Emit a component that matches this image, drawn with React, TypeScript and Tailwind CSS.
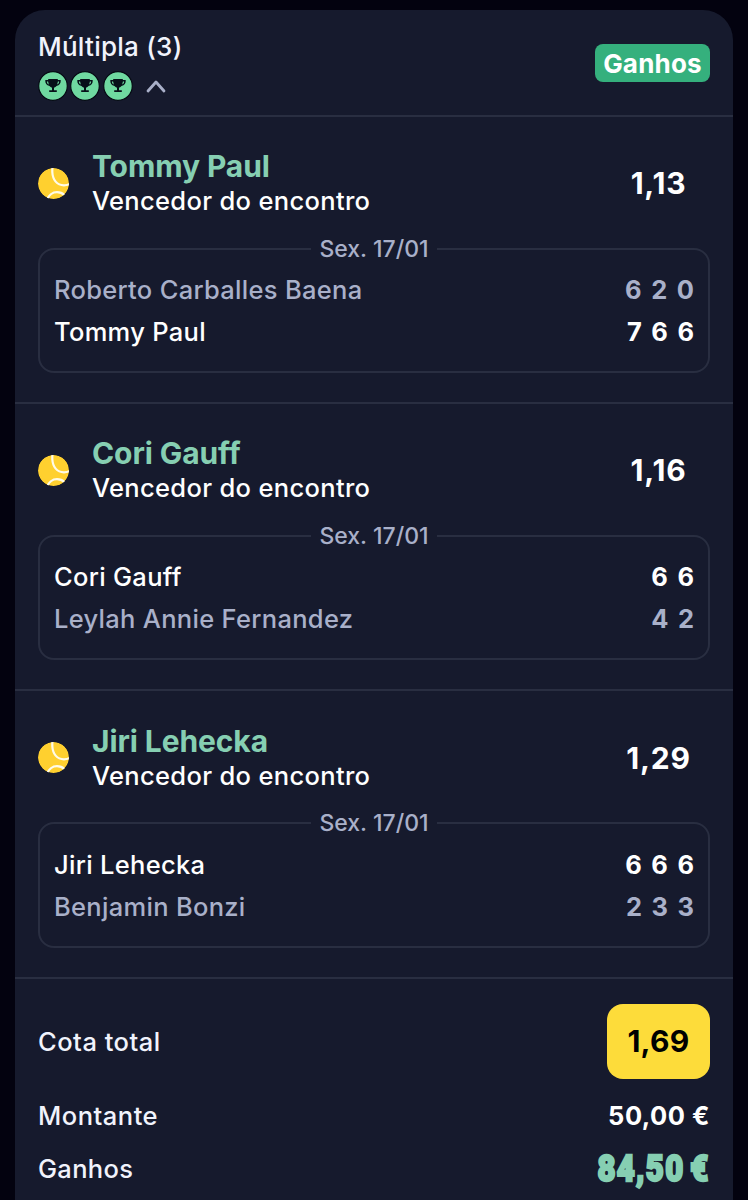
type Player = {
  name: string;
  sets: string;
  winner: boolean;
};

type Bet = {
  pick: string;
  odds: string;
  date: string;
  players: Player[];
};

const bets: Bet[] = [
  {
    pick: "Tommy Paul",
    odds: "1,13",
    date: "Sex. 17/01",
    players: [
      { name: "Roberto Carballes Baena", sets: "6 2 0", winner: false },
      { name: "Tommy Paul", sets: "7 6 6", winner: true },
    ],
  },
  {
    pick: "Cori Gauff",
    odds: "1,16",
    date: "Sex. 17/01",
    players: [
      { name: "Cori Gauff", sets: "6 6", winner: true },
      { name: "Leylah Annie Fernandez", sets: "4 2", winner: false },
    ],
  },
  {
    pick: "Jiri Lehecka",
    odds: "1,29",
    date: "Sex. 17/01",
    players: [
      { name: "Jiri Lehecka", sets: "6 6 6", winner: true },
      { name: "Benjamin Bonzi", sets: "2 3 3", winner: false },
    ],
  },
];

function TrophyBadge() {
  return (
    <svg width="30" height="30" viewBox="0 0 30 30" className="block">
      <circle cx="15" cy="15" r="14.3" fill="#6fd9a0" stroke="#060b14" strokeWidth="1.2" />
      <path
        d="M10.2 8h9.6v1h2.9c.3 3.4-1.2 5.5-4.200 6-.6.9-1.4 1.5-2.5 1.7v2.5h2.800v1.700h-7.600v-1.700H14v-2.500c-1.100-.2-1.900-.8-2.500-1.700-3-.5-4.500-2.600-4.200-6h2.900z"
        fill="#071019"
      />
      <path
        d="M10.1 10.5H8.900c.1 1.500.7 2.500 1.900 3zM19.900 10.5h1.200c-.1 1.500-.7 2.500-1.900 3z"
        fill="#6fd9a0"
      />
    </svg>
  );
}

function TennisBall() {
  return (
    <svg width="31" height="31" viewBox="0 0 31 31" className="block">
      <defs>
        <clipPath id="ball">
          <circle cx="15.5" cy="15.5" r="15.5" />
        </clipPath>
      </defs>
      <g clipPath="url(#ball)">
        <circle cx="15.5" cy="15.5" r="15.5" fill="#ffd02f" />
        <g fill="none" stroke="#fffbe8" strokeWidth="2.2">
          <path d="M14.3-1v5C14.700 12 19 17.300 26 17.300c2 0 4-.4 6-1.300" />
          <path d="M9 32c1.500-4.500 5.500-7.800 10-7.800 3 0 5.500 1 7.500 3" />
        </g>
      </g>
    </svg>
  );
}

function BetSection({ bet }: { bet: Bet }) {
  return (
    <section className="h-[287.3px] border-b-2 border-[#292e41] px-[23px] pt-[31.5px]">
      <div className="flex h-[70px] items-center">
        <TennisBall />
        <div className="ml-[23px] flex-1">
          <h2 className="text-[30px] leading-[36px] font-bold tracking-[-0.1px] text-[#86cfb2]">
            {bet.pick}
          </h2>
          <p className="text-[25.5px] leading-[34px] font-[450] tracking-[0.33px] text-white">
            Vencedor do encontro
          </p>
        </div>
        <div className="w-[103px] text-center text-[30px] leading-[36px] font-[650] tracking-[0.8px] text-white">
          {bet.odds}
        </div>
      </div>

      <div className="mt-[29.5px] h-[125.5px] rounded-2xl border-2 border-[#292e41] px-3.5">
        <div className="-mt-[15px] flex h-[28px] justify-center">
          <span className="bg-[#161a2d] px-2 text-[23px] leading-[28px] font-[450] whitespace-nowrap text-[#a9b0c9]">
            {bet.date}
          </span>
        </div>
        <div className="mt-[6.5px]">
          {bet.players.map((player) => (
            <div
              key={player.name}
              className={
                player.winner
                  ? "flex h-[42px] items-center justify-between text-[25.5px] text-white"
                  : "flex h-[42px] items-center justify-between text-[25.5px] text-[#a9b0c9]"
              }
            >
              <span className="font-[450] tracking-[0.3px]">{player.name}</span>
              <span className="font-[650] [word-spacing:3.5px]">{player.sets}</span>
            </div>
          ))}
        </div>
      </div>
    </section>
  );
}

export default function App() {
  return (
    <div className="h-[1200px] overflow-hidden bg-[#03020f] px-[15px] pt-[10px] font-['Inter',sans-serif]">
      <main className="h-[1220px] rounded-t-[30px] bg-[#161a2d]">
        <header className="flex h-[106.7px] items-center justify-between border-b-2 border-[#292e41] px-[23px]">
          <div className="pt-[7px]">
            <h1 className="text-[26px] leading-[34px] font-[450] tracking-[0.25px] text-[#f1f3fc]">
              Múltipla (3)
            </h1>
            <div className="mt-[7px] flex items-center gap-[2.4px]">
              <TrophyBadge />
              <TrophyBadge />
              <TrophyBadge />
              <svg width="20" height="14" viewBox="0 0 20 14" className="ml-[11px]">
                <path
                  d="M2 12 10 3l8 9"
                  fill="none"
                  stroke="#a9b0c9"
                  strokeWidth="2.8"
                  strokeLinecap="round"
                  strokeLinejoin="round"
                />
              </svg>
            </div>
          </div>
          <span className="mt-[2px] flex h-[38px] w-[115px] items-center justify-center rounded-lg bg-[#35b07d] text-[26px] font-bold tracking-[0.2px] text-white">
            Ganhos
          </span>
        </header>

        {bets.map((bet) => (
          <BetSection key={bet.pick} bet={bet} />
        ))}

        <footer className="px-[23px] pt-[25px] text-[25.5px] font-[450] text-[#f1f3fc]">
          <div className="flex h-[75px] items-center justify-between">
            <span className="pt-[2px] tracking-[0.5px]">Cota total</span>
            <span className="flex h-[75px] w-[103px] items-center justify-center rounded-2xl bg-[#fddc3a] text-[30px] font-[650] tracking-[0.3px] text-black">
              1,69
            </span>
          </div>
          <div className="mt-[18px] flex h-[40px] items-center justify-between">
            <span className="tracking-[0.5px]">Montante</span>
            <span className="font-[650] tracking-[0.5px] text-white">50,00 €</span>
          </div>
          <div className="mt-[13px] flex h-[40px] items-center justify-between">
            <span className="tracking-[0.3px]">Ganhos</span>
            <span className="-mt-[2px] origin-right scale-x-[0.84] font-['Roboto',sans-serif] text-[37px] leading-[40px] font-black tracking-[1.6px] text-[#86cfb2] [-webkit-text-stroke:2.4px_#86cfb2] [word-spacing:-4px]">
              84,50 €
            </span>
          </div>
        </footer>
      </main>
    </div>
  );
}
